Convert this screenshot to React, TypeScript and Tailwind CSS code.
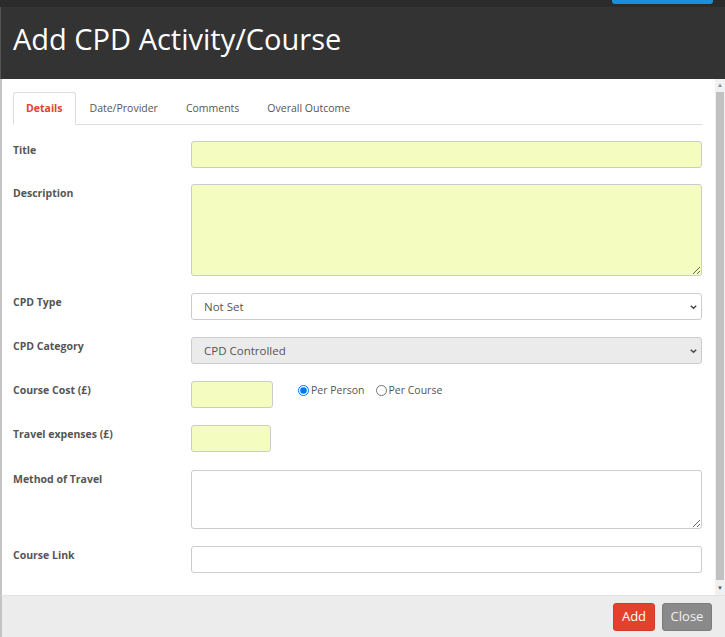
import React from "react";

const Label = ({ children }: { children: React.ReactNode }) => (
    <div className="w-[178px] shrink-0 pt-[1px] text-[10.5px] font-bold leading-[16px] text-[#555]">{children}</div>
);

const Chevron = () => (
    <svg className="absolute right-[4px] top-1/2 -translate-y-1/2 pointer-events-none" width="9" height="9" viewBox="0 0 10 10">
        <path d="M2 3.5 L5 6.5 L8 3.5" fill="none" stroke="#444" strokeWidth="1.6" />
    </svg>
);

const SelectBox = ({ value, bg }: { value: string; bg: string }) => (
    <div className="relative flex-1 h-[27px]">
        <select className={`block w-full h-[27px] appearance-none border border-[#ccc] rounded-[3px] px-[12px] text-[11.5px] text-[#555] outline-none ${bg}`}>
            <option>{value}</option>
        </select>
        <Chevron />
    </div>
);

export default function App() {
    return (
        <div className="w-[725px] h-[637px] flex flex-col overflow-hidden bg-[#333] font-['Open_Sans',sans-serif]">
            <div className="h-[7px] bg-[#2b2b2b] flex justify-end pr-[12px]">
                <div className="w-[101px] h-[4px] bg-[#1a8fdd] rounded-b-[3px]"></div>
            </div>
            <div className="h-[72px] flex items-center px-[12px] pb-[9px] border-l border-[#555]">
                <h1 className="text-[29px] text-white leading-none">Add CPD Activity/Course</h1>
            </div>
            <div className="flex-1 flex bg-white border-l-2 border-[#c4c4c4]">
                <div className="flex-1 pt-[13px] pl-[11px] pr-[13px]">
                    <div className="flex h-[33px] border-b border-[#ddd] text-[10.5px] text-[#555]">
                        <div className="px-[12px] pt-[1px] flex items-center border border-[#ddd] border-b-white rounded-t-[3px] -mb-px bg-white font-bold text-[#e8412c]">Details</div>
                        <div className="px-[14px] pt-[1px] flex items-center">Date/Provider</div>
                        <div className="px-[14px] pt-[1px] flex items-center">Comments</div>
                        <div className="px-[14px] pt-[1px] flex items-center">Overall Outcome</div>
                    </div>
                    <div className="flex flex-col gap-[17px] pt-[16px]">
                        <div className="flex">
                            <Label>Title</Label>
                            <input className="flex-1 h-[27px] border border-[#ccc] rounded-[3px] bg-[#f4fcc0] outline-none" />
                        </div>
                        <div className="flex -mt-px">
                            <Label>Description</Label>
                            <textarea className="flex-1 h-[92px] border border-[#ccc] rounded-[3px] bg-[#f4fcc0] outline-none block"></textarea>
                        </div>
                        <div className="flex">
                            <Label>CPD Type</Label>
                            <SelectBox value="Not Set" bg="bg-white" />
                        </div>
                        <div className="flex">
                            <Label>CPD Category</Label>
                            <SelectBox value="CPD Controlled" bg="bg-[#ebebeb]" />
                        </div>
                        <div className="flex">
                            <Label>Course Cost (£)</Label>
                            <input className="w-[82px] h-[27px] border border-[#ccc] rounded-[3px] bg-[#f4fcc0] outline-none" />
                            <div className="flex items-start gap-[11px] pl-[25px] pt-[1px] text-[10.5px] text-[#555] leading-[16px]">
                                <label className="flex items-center gap-[2px]">
                                    <input type="radio" name="cost" defaultChecked className="w-[11px] h-[11px] m-0" />
                                    Per Person
                                </label>
                                <label className="flex items-center gap-[2px]">
                                    <input type="radio" name="cost" className="w-[11px] h-[11px] m-0" />
                                    Per Course
                                </label>
                            </div>
                        </div>
                        <div className="flex">
                            <Label>Travel expenses (£)</Label>
                            <input className="w-[80px] h-[27px] border border-[#ccc] rounded-[3px] bg-[#f4fcc0] outline-none" />
                        </div>
                        <div className="flex mt-px">
                            <Label>Method of Travel</Label>
                            <textarea className="flex-1 h-[59px] border border-[#ccc] rounded-[3px] bg-white outline-none block"></textarea>
                        </div>
                        <div className="flex">
                            <Label>Course Link</Label>
                            <input className="flex-1 h-[27px] border border-[#ccc] rounded-[3px] bg-white outline-none" />
                        </div>
                    </div>
                </div>
                <div className="w-[10px] bg-[#f1f1f1] flex flex-col items-center">
                    <div className="h-[12px] flex items-center text-[6px] text-[#888] leading-none">▲</div>
                    <div className="w-[8px] flex-1 bg-[#c1c1c1] my-[1px]"></div>
                    <div className="h-[14px] flex items-center text-[6px] text-[#555] leading-none">▼</div>
                </div>
            </div>
            <div className="h-[42px] bg-[#ececec] border-t border-[#e2e2e2] border-l-2 border-l-[#c4c4c4] flex justify-end items-center gap-[7px] pr-[13px] pt-[1px]">
                <button className="h-[28px] w-[42px] bg-[#e5402d] border border-[#d63a28] rounded-[3px] text-white text-[13px]">Add</button>
                <button className="h-[28px] w-[50px] bg-[#8a8a8a] border border-[#7c7c7c] rounded-[3px] text-[#f0f0f0] text-[13px]">Close</button>
            </div>
        </div>
    );
}
